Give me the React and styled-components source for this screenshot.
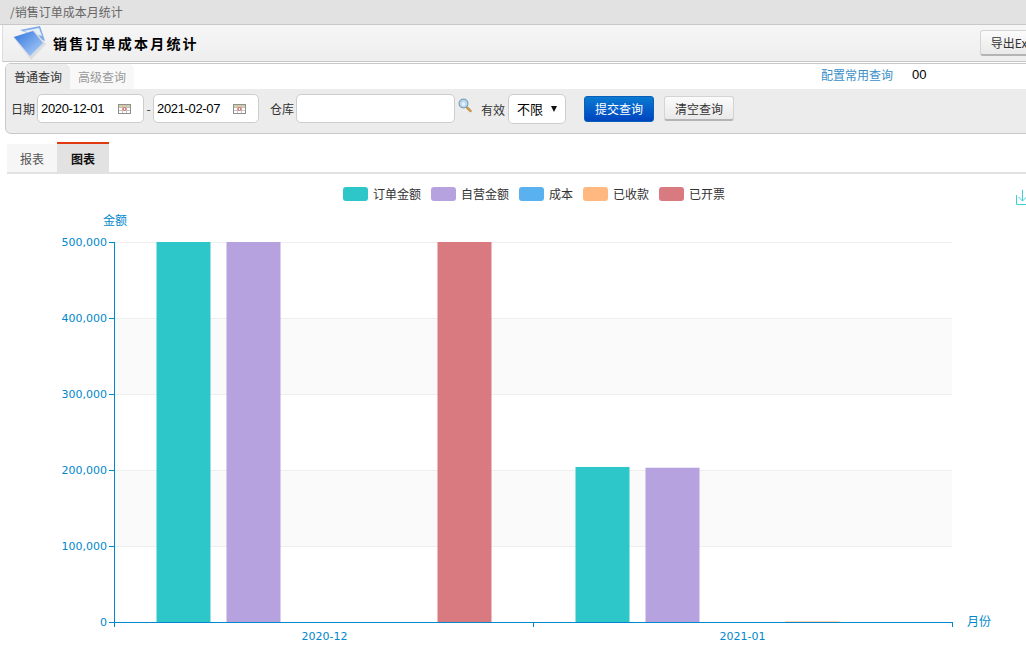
import React from 'react';
import styled, { createGlobalStyle } from 'styled-components';

const GlobalStyle = createGlobalStyle`
  html, body {
    margin: 0;
    padding: 0;
    background: #fff;
    overflow: hidden;
  }
  body {
    font-family: 'Noto Sans CJK SC', 'Liberation Sans', sans-serif;
    font-size: 12px;
    color: #333;
  }
`;

const AXIS = '#0088cc';
const LEGEND = [
  { name: '订单金额', color: '#2ec7c9' },
  { name: '自营金额', color: '#b6a2de' },
  { name: '成本', color: '#5ab1ef' },
  { name: '已收款', color: '#ffb980' },
  { name: '已开票', color: '#d87a80' },
];
const BARS = [
  { x: 156.5, value: 500000, color: '#2ec7c9' },
  { x: 226.5, value: 500000, color: '#b6a2de' },
  { x: 437.5, value: 500000, color: '#d87a80' },
  { x: 575.5, value: 204000, color: '#2ec7c9' },
  { x: 645.5, value: 203000, color: '#b6a2de' },
  { x: 785.5, value: 800, color: '#ffb980' },
];
const TICKS = [0, 100000, 200000, 300000, 400000, 500000];
const PLOT = { left: 114, right: 952, top: 35, bottom: 415 };
const yOf = (v) => PLOT.bottom - (v / 500000) * (PLOT.bottom - PLOT.top);

const Page = styled.div`
  width: 1060px;
`;

const TopBar = styled.div`
  height: 24px;
  line-height: 24px;
  padding-left: 10px;
  background: #e2e2e2;
  border-bottom: 1px solid #c8c8c8;
  color: #666;
`;

const TitleBar = styled.div`
  height: 36px;
  margin-left: 2px;
  padding: 0 8px 0 9px;
  display: flex;
  align-items: center;
  background: linear-gradient(#f6f6f6, #eeeeee);
  border-left: 1px solid #ddd;
  border-bottom: 1px solid #c8c8c8;
`;

const PageTitle = styled.h1`
  flex: 1;
  margin: 0 0 0 7px;
  font-size: 14px;
  font-weight: 700;
  letter-spacing: 2.2px;
  color: #000;
`;

const ExportButton = styled.button`
  width: 72px;
  height: 26px;
  padding: 0 0 0 2px;
  font: inherit;
  color: #333;
  background: linear-gradient(#fbfbfb, #e9e9e9);
  border: 1px solid #d4d4d4;
  border-bottom: 2px solid #b4b4b4;
  border-radius: 3px;
`;

const QueryPanel = styled.div`
  margin: 1px 0 0 5px;
  height: 69px;
  background: #ececec;
  border: 1px solid #c8c8c8;
  border-radius: 6px;
  overflow: hidden;
`;

const TabRow = styled.div`
  height: 25px;
  display: flex;
  align-items: stretch;
  background: #fff;
`;

const QueryTab = styled.div`
  width: 64px;
  line-height: 26px;
  text-align: center;
  border-top-right-radius: 5px;
  background: ${(p) => (p.$active ? '#ececec' : '#f8f8f8')};
  color: ${(p) => (p.$active ? '#333' : '#999')};
`;

const ConfigLink = styled.a`
  margin-left: auto;
  line-height: 21px;
  color: #3a8fc8;
`;

const SavedQuery = styled.span`
  width: 147px;
  margin-left: 16px;
  padding-left: 3px;
  line-height: 21px;
  font-family: 'Liberation Sans', sans-serif;
  font-size: 13px;
  color: #000;
`;

const FormRow = styled.div`
  height: 39px;
  padding: 0 0 5px 5px;
  display: flex;
  align-items: center;
`;

const Label = styled.label`
  margin: ${(p) => p.$margin || '0 2px 0 0'};
`;

const Field = styled.div`
  width: ${(p) => p.$width}px;
  height: 29px;
  box-sizing: border-box;
  display: flex;
  align-items: center;
  justify-content: space-between;
  padding: 0 12px 0 3px;
  background: #fff;
  border: 1px solid #cdcdcd;
  border-radius: 5px;
  font-family: 'Liberation Sans', sans-serif;
  font-size: 13px;
  letter-spacing: -0.35px;
  color: #000;
`;

const Dash = styled.span`
  width: 9px;
  text-align: center;
`;

const Select = styled(Field)`
  width: 58px;
  height: 30px;
  margin-right: 18px;
  padding: 0 8px;
  font-family: 'Noto Sans CJK SC', sans-serif;
  font-size: 13px;
  letter-spacing: 0;
`;

const Caret = styled.i`
  width: 0;
  height: 0;
  border-left: 3.5px solid transparent;
  border-right: 3.5px solid transparent;
  border-top: 6px solid #111;
`;

const SubmitButton = styled.button`
  width: 70px;
  height: 26px;
  padding: 0;
  font: inherit;
  color: #fff;
  background: linear-gradient(#0a7ad2, #0044c0);
  border: 1px solid #0a5fb8;
  border-radius: 3px;
`;

const ClearButton = styled.button`
  width: 70px;
  height: 25px;
  margin-left: 10px;
  padding: 0;
  font: inherit;
  color: #333;
  background: linear-gradient(#fbfbfb, #e9e9e9);
  border: 1px solid #d4d4d4;
  border-bottom: 2px solid #b4b4b4;
  border-radius: 3px;
`;

const ViewTabs = styled.div`
  margin: 8px 0 0 7px;
  display: flex;
  align-items: flex-end;
  border-bottom: 2px solid #e2e2e2;
`;

const ViewTab = styled.div`
  width: ${(p) => (p.$active ? 52 : 50)}px;
  height: 28px;
  line-height: 30px;
  text-align: center;
  background: ${(p) => (p.$active ? '#e2e2e2' : '#f6f6f6')};
  border-top: ${(p) => (p.$active ? '2px solid #e03a10' : '0')};
  color: ${(p) => (p.$active ? '#111' : '#555')};
  font-weight: ${(p) => (p.$active ? 700 : 400)};
`;

const ChartArea = styled.section`
  position: relative;
  width: 1026px;
`;

const Legend = styled.div`
  height: 27px;
  padding: 6px 0 0 42px;
  display: flex;
  justify-content: center;
  align-items: center;
  gap: 10px;
`;

const LegendItem = styled.div`
  display: flex;
  align-items: center;
  gap: 5px;
`;

const Swatch = styled.span`
  width: 25px;
  height: 14px;
  border-radius: 3px;
  background: ${(p) => p.$color};
`;

const DownloadIcon = styled.svg`
  position: absolute;
  left: 1015px;
  top: 16px;
`;

const Plot = styled.svg`
  display: block;
  font-family: 'DejaVu Sans', sans-serif;
  font-size: 11px;
`;

const SearchIconWrap = styled.svg`
  margin: 0 0 6px 3px;
  flex-shrink: 0;
`;

const Logo = () => (
  <svg width="34" height="36" viewBox="0 0 34 36">
    <defs>
      <linearGradient id="logoBlue" x1="0" y1="0" x2="1" y2="1">
        <stop offset="0" stopColor="#2f74de" />
        <stop offset="1" stopColor="#b4d2f8" />
      </linearGradient>
    </defs>
    <polygon points="8,5 28,1 33,16 15,8" fill="#7eaae6" />
    <polygon points="11,6 27,3 30,11" fill="#e6effb" />
    <polygon points="1,12 22,5 34,19 19,35" fill="#d8dce3" />
    <polygon points="2,12 21,6 31,18 18,31" fill="url(#logoBlue)" />
  </svg>
);

const CalendarIcon = () => (
  <svg width="13" height="10" viewBox="0 0 13 10">
    <rect x="0.5" y="0.5" width="12" height="9" fill="#fff" stroke="#8f8f8f" />
    <rect x="1" y="1" width="11" height="2" fill="#d8cfa0" />
    <path d="M4.5 1v8M8.5 1v8M1 3.5h11M1 6.5h11" stroke="#c4c4c4" />
    <circle cx="6.5" cy="5" r="1.5" fill="#fff" stroke="#e05050" />
  </svg>
);

const SearchIcon = () => (
  <SearchIconWrap width="14" height="15" viewBox="0 0 14 15">
    <path d="M8 8.5l4.5 4.5" stroke="#c89a50" strokeWidth="2.5" strokeLinecap="round" />
    <circle cx="5.5" cy="5.5" r="4.4" fill="#bcd8f0" stroke="#7ba3bd" strokeWidth="1.2" />
    <circle cx="5.5" cy="6" r="1.8" fill="#e8f2fb" />
  </SearchIconWrap>
);

function Chart() {
  const bands = TICKS.slice(0, -1).filter((_, i) => i % 2 === 1);
  return (
    <Plot width="1026" height="443" viewBox="0 0 1026 443">
      {bands.map((v) => (
        <rect
          key={v}
          x={PLOT.left}
          y={yOf(v + 100000)}
          width={PLOT.right - PLOT.left}
          height={yOf(v) - yOf(v + 100000)}
          fill="#fafafa"
        />
      ))}
      {TICKS.slice(1).map((v) => (
        <line key={v} x1={PLOT.left} x2={PLOT.right} y1={yOf(v) + 0.5} y2={yOf(v) + 0.5} stroke="#eeeeee" />
      ))}
      {BARS.map((b) => (
        <rect key={b.x} x={b.x} y={yOf(b.value)} width="54" height={PLOT.bottom - yOf(b.value)} fill={b.color} />
      ))}
      <path
        d={`M114.5 ${PLOT.top}V${PLOT.bottom + 5}M114 ${PLOT.bottom + 0.5}H952.5M533.5 ${PLOT.bottom}v5M952.5 ${PLOT.bottom}v5`}
        stroke={AXIS}
        fill="none"
      />
      {TICKS.map((v) => (
        <g key={v}>
          <line x1="109" x2="114" y1={yOf(v) + 0.5} y2={yOf(v) + 0.5} stroke={AXIS} />
          <text x="107" y={yOf(v) + 4} textAnchor="end" fill={AXIS}>
            {v.toLocaleString('en-US')}
          </text>
        </g>
      ))}
      <text x="324.5" y="433" textAnchor="middle" fill={AXIS}>2020-12</text>
      <text x="742.5" y="433" textAnchor="middle" fill={AXIS}>2021-01</text>
      <text x="115" y="18" textAnchor="middle" fill={AXIS} fontFamily="'Noto Sans CJK SC', sans-serif" fontSize="12">金额</text>
      <text x="967" y="419" fill={AXIS} fontFamily="'Noto Sans CJK SC', sans-serif" fontSize="12">月份</text>
    </Plot>
  );
}

export default function App() {
  return (
    <Page>
      <GlobalStyle />
      <TopBar>/销售订单成本月统计</TopBar>
      <TitleBar>
        <Logo />
        <PageTitle>销售订单成本月统计</PageTitle>
        <ExportButton>导出Excel</ExportButton>
      </TitleBar>
      <QueryPanel>
        <TabRow>
          <QueryTab $active>普通查询</QueryTab>
          <QueryTab>高级查询</QueryTab>
          <ConfigLink>配置常用查询</ConfigLink>
          <SavedQuery>00</SavedQuery>
        </TabRow>
        <FormRow>
          <Label>日期</Label>
          <Field $width={107}>
            2020-12-01
            <CalendarIcon />
          </Field>
          <Dash>-</Dash>
          <Field $width={106}>
            2021-02-07
            <CalendarIcon />
          </Field>
          <Label $margin="0 2px 0 11px">仓库</Label>
          <Field $width={159} />
          <SearchIcon />
          <Label $margin="2px 3px 0 9px">有效</Label>
          <Select>
            不限
            <Caret />
          </Select>
          <SubmitButton>提交查询</SubmitButton>
          <ClearButton>清空查询</ClearButton>
        </FormRow>
      </QueryPanel>
      <ViewTabs>
        <ViewTab>报表</ViewTab>
        <ViewTab $active>图表</ViewTab>
      </ViewTabs>
      <ChartArea>
        <Legend>
          {LEGEND.map((item) => (
            <LegendItem key={item.name}>
              <Swatch $color={item.color} />
              {item.name}
            </LegendItem>
          ))}
        </Legend>
        <DownloadIcon width="14" height="16" viewBox="0 0 14 16" fill="none" stroke="#3fd0d6">
          <path d="M7.5 0v11M3.5 7l4 4 4-4M1.5 5v9.5H14" />
        </DownloadIcon>
        <Chart />
      </ChartArea>
    </Page>
  );
}
